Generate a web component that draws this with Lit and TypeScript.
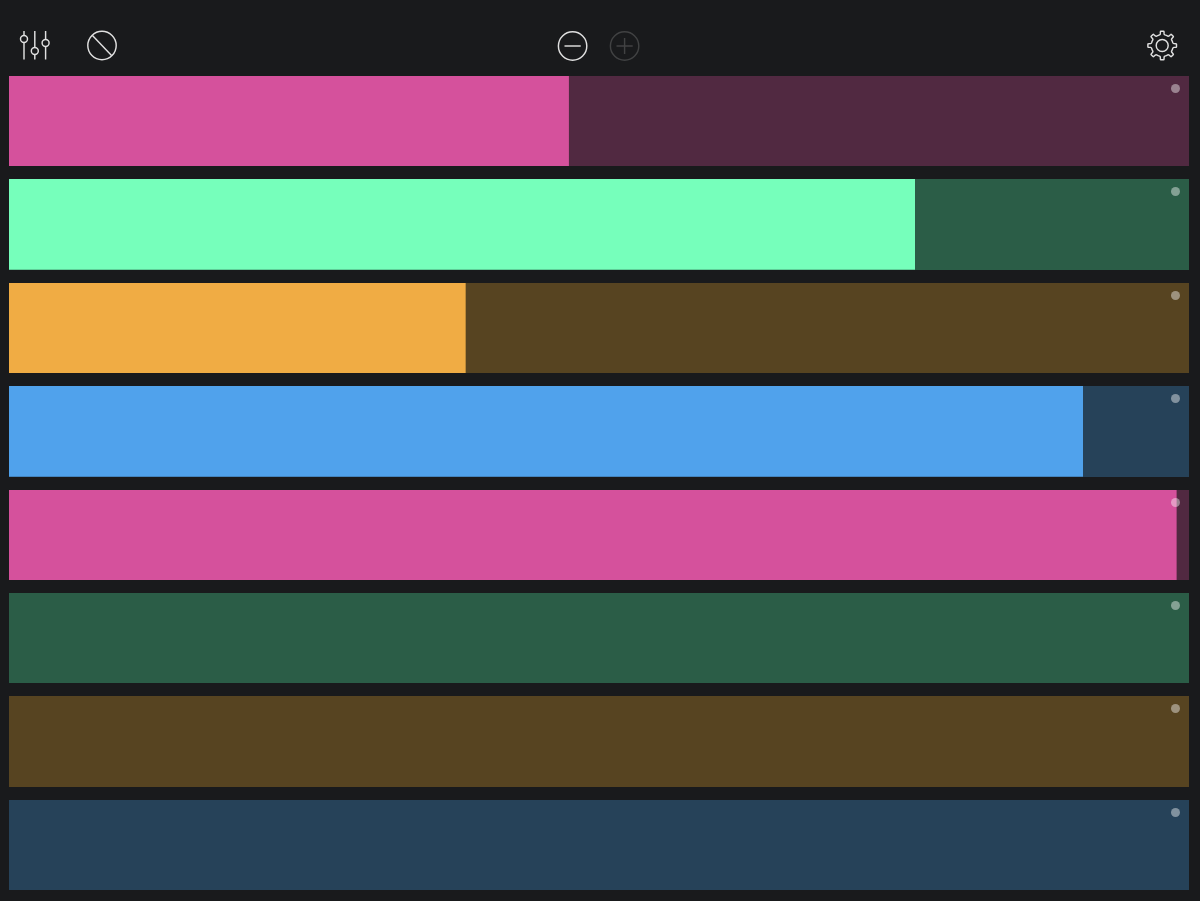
import { LitElement, html, css, svg } from "lit";
import { customElement, property, state } from "lit/decorators.js";

interface Channel {
  tone: "pink" | "green" | "amber" | "blue";
  value: number;
}

const MAX = 1000;

/** Outline of an eight-toothed cog centred on (cx, cy). */
function cogPath(cx: number, cy: number): string {
  const outer = 14.3;
  const body = 10.9;
  const at = (forward: number, side: number, angle: number) => {
    const x = cx + forward * Math.sin(angle) + side * Math.cos(angle);
    const y = cy - forward * Math.cos(angle) + side * Math.sin(angle);
    return `${x.toFixed(2)} ${y.toFixed(2)}`;
  };
  let d = "";
  for (let i = 0; i < 8; i++) {
    const a = (i * Math.PI) / 4;
    d += i ? `A${body} ${body} 0 0 1 ${at(body - 0.3, -2.7, a)}` : `M${at(body - 0.3, -2.7, a)}`;
    d += `Q${at(body, -2, a)} ${at(11.6, -1.9, a)}`;
    d += `L${at(outer - 0.5, -1.8, a)}Q${at(outer, -1.8, a)} ${at(outer, -1.3, a)}`;
    d += `L${at(outer, 1.3, a)}Q${at(outer, 1.8, a)} ${at(outer - 0.5, 1.8, a)}`;
    d += `L${at(11.6, 1.9, a)}Q${at(body, 2, a)} ${at(body - 0.3, 2.7, a)}`;
  }
  return d + "Z";
}

const icons = {
  mixer: svg`<path d="M4 0v4.5M4 11.5V28.5M14.8 0v16.5M14.8 23.5V28.5M25.6 0v8.5M25.6 15.5V28.5"/>
    <circle cx="4" cy="8" r="3.5"/><circle cx="14.8" cy="20" r="3.5"/><circle cx="25.6" cy="12" r="3.5"/>`,
  clear: svg`<circle cx="15" cy="14.5" r="14.2"/><path d="M5.2 4.3L24.8 24.7"/>`,
  minus: svg`<circle cx="14.6" cy="15" r="14.2"/><path d="M6.5 15H22.7"/>`,
  plus: svg`<circle cx="14.6" cy="15" r="14.2"/><path d="M6.5 15H22.7M14.6 7V23"/>`,
  cog: svg`<path d=${cogPath(15.2, 14.5)}/><circle cx="15.2" cy="14.5" r="6"/>`,
};

@customElement("icon-button")
class IconButton extends LitElement {
  @property() icon: keyof typeof icons = "cog";
  @property() label = "";
  @property({ type: Boolean }) disabled = false;

  static styles = css`
    :host {
      display: block;
    }
    .button {
      display: block;
      width: 30px;
      height: 30px;
      padding: 0;
      border: 0;
      background: none;
      color: #e0e0e0;
      cursor: pointer;
    }
    .button:disabled {
      color: #414243;
      cursor: default;
    }
    .glyph {
      display: block;
      overflow: visible;
      fill: none;
      stroke: currentColor;
      stroke-width: 1.45;
      stroke-linejoin: round;
    }
  `;

  render() {
    return html`<button class="button" aria-label=${this.label} ?disabled=${this.disabled}>
      <svg class="glyph" width="30" height="30" viewBox="0 0 30 30" aria-hidden="true">
        ${icons[this.icon]}
      </svg>
    </button>`;
  }
}

@customElement("app-root")
class AppRoot extends LitElement {
  @state() private channels: Channel[] = [
    { tone: "pink", value: 474.5 },
    { tone: "green", value: 768 },
    { tone: "amber", value: 387 },
    { tone: "blue", value: 910.5 },
    { tone: "pink", value: 989.5 },
    { tone: "green", value: 0 },
    { tone: "amber", value: 0 },
    { tone: "blue", value: 0 },
  ];

  static styles = css`
    :host {
      display: flex;
      flex-direction: column;
      box-sizing: border-box;
      min-height: 100vh;
      padding: 0 11px 11px 9px;
      background: #191a1c;
      font-family: "Liberation Sans", Arial, sans-serif;
    }
    .toolbar {
      display: grid;
      grid-template-columns: 1fr auto 1fr;
      align-items: center;
      padding: 31px 12px 15px 11px;
    }
    .group {
      display: flex;
    }
    .tools {
      gap: 37px;
    }
    .count {
      gap: 22px;
    }
    .settings {
      justify-content: flex-end;
    }
    .channels {
      flex: 1;
      display: flex;
      flex-direction: column;
      gap: 13px;
    }
    .channel {
      position: relative;
      flex: 1;
      display: flex;
      min-height: 32px;
    }
    .pink {
      --fill: #d5519c;
      --track: #512941;
    }
    .green {
      --fill: #76ffbb;
      --track: #2b5d47;
    }
    .amber {
      --fill: #f0ac44;
      --track: #574421;
    }
    .blue {
      --fill: #50a2ec;
      --track: #264259;
    }
    .slider {
      appearance: none;
      -webkit-appearance: none;
      flex: 1;
      min-width: 0;
      margin: 0;
      border-radius: 0;
      background: linear-gradient(var(--fill), var(--fill)) left / var(--level) 100% no-repeat
        var(--track);
      cursor: ew-resize;
    }
    .slider::-webkit-slider-thumb {
      -webkit-appearance: none;
      width: 1px;
      height: 1px;
      background: transparent;
    }
    .dot {
      position: absolute;
      top: 8px;
      right: 9px;
      width: 9px;
      height: 9px;
      padding: 0;
      border: 0;
      border-radius: 50%;
      background: rgba(255, 255, 255, 0.42);
      cursor: pointer;
    }
  `;

  private setLevel(index: number, event: Event) {
    const value = Number((event.target as HTMLInputElement).value);
    this.channels = this.channels.map((c, i) => (i === index ? { ...c, value } : c));
  }

  render() {
    return html`
      <header class="toolbar">
        <div class="group tools">
          <icon-button icon="mixer" label="Mixer"></icon-button>
          <icon-button icon="clear" label="Clear all"></icon-button>
        </div>
        <div class="group count">
          <icon-button icon="minus" label="Remove slider"></icon-button>
          <icon-button icon="plus" label="Add slider" disabled></icon-button>
        </div>
        <div class="group settings">
          <icon-button icon="cog" label="Settings"></icon-button>
        </div>
      </header>
      <main class="channels">
        ${this.channels.map(
          (c, i) => html`<div class="channel ${c.tone}">
            <input
              class="slider"
              type="range"
              min="0"
              max=${MAX}
              step="0.5"
              aria-label="Slider ${i + 1}"
              .value=${String(c.value)}
              style="--level: ${(c.value / MAX) * 100}%"
              @input=${(e: Event) => this.setLevel(i, e)}
            />
            <button class="dot" aria-label="Slider ${i + 1} options"></button>
          </div>`,
        )}
      </main>
    `;
  }
}
